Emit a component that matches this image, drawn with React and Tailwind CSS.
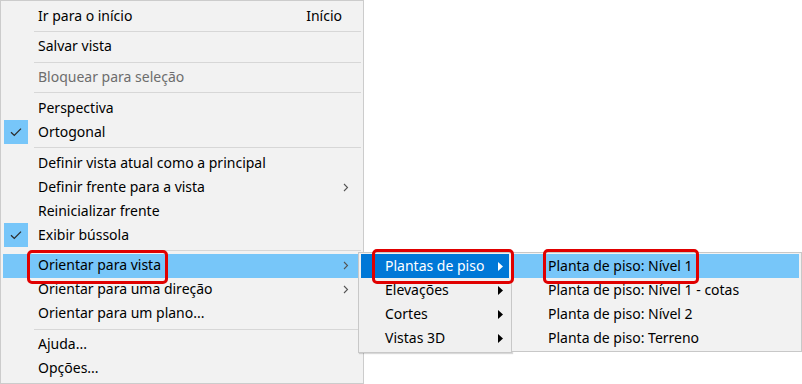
import React from 'react';

const font = { fontFamily: '"Noto Sans", "Open Sans", sans-serif' };

function Check() {
  return (
    <svg width="12" height="10" viewBox="0 0 12 10" fill="none">
      <path d="M1 5.2 L4.3 8.4 L11 1.6" stroke="#2b2b2b" strokeWidth="1.3" />
    </svg>
  );
}

function Chevron() {
  return (
    <svg width="6" height="9" viewBox="0 0 6 9" fill="none">
      <path d="M1 1 L4.5 4.5 L1 8" stroke="#555" strokeWidth="1.1" />
    </svg>
  );
}

function Tri({ white }) {
  return (
    <svg width="5" height="9" viewBox="0 0 5 9">
      <path d="M0 0 L5 4.5 L0 9 Z" fill={white ? '#fff' : '#000'} />
    </svg>
  );
}

function Sep() {
  return (
    <div className="h-[6.8px] flex items-center pl-[33px] pr-[2px]">
      <div className="h-px w-full bg-[#d7d7d7]" />
    </div>
  );
}

function Item({ label, checked, sub, shortcut, disabled, active }) {
  return (
    <div className={`relative h-[24px] flex items-center mx-[2px] ${active ? 'bg-[#77c6f9]' : ''}`}>
      <div className={`w-[24px] h-full flex items-center justify-center ml-px ${checked ? 'bg-[#77c6f9]' : ''}`}>
        {checked && <Check />}
      </div>
      <span className={`ml-[10px] flex-1 pb-[2px] text-[14px] ${disabled ? 'text-[#6d6d6d]' : 'text-black'}`}>{label}</span>
      {shortcut && <span className="pb-[2px] text-[14px] text-black mr-[19px]">{shortcut}</span>}
      {sub && <span className="mr-[12px] flex items-center"><Chevron /></span>}
    </div>
  );
}

export default function App() {
  return (
    <div className="relative w-[802px] h-[384px] bg-white overflow-hidden" style={font}>
      {/* Main menu */}
      <div className="w-[364px] h-[384px] bg-[#f2f2f2] border border-[#cccccc] pt-[3px]">
        <Item label="Ir para o início" shortcut="Início" />
        <Sep />
        <Item label="Salvar vista" />
        <Sep />
        <Item label="Bloquear para seleção" disabled />
        <Sep />
        <Item label="Perspectiva" />
        <Item label="Ortogonal" checked />
        <Sep />
        <Item label="Definir vista atual como a principal" />
        <Item label="Definir frente para a vista" sub />
        <Item label="Reinicializar frente" />
        <Item label="Exibir bússola" checked />
        <Sep />
        <Item label="Orientar para vista" sub active />
        <Item label="Orientar para uma direção" sub />
        <Item label="Orientar para um plano..." />
        <Sep />
        <Item label="Ajuda..." />
        <Item label="Opções..." />
      </div>

      {/* Submenu 1 */}
      <div className="absolute left-[358px] top-[252px] w-[154px] h-[101px] bg-[#f0f0f0] border border-[#c8c8c8] shadow-[1px_1px_1px_rgba(0,0,0,0.15)] pt-px px-[2px]">
        {[
          ['Plantas de piso', true],
          ['Elevações', false],
          ['Cortes', false],
          ['Vistas 3D', false],
        ].map(([label, on]) => (
          <div key={label} className={`h-[24px] flex items-center pl-[24px] pr-[6px] ${on ? 'bg-[#0078d7] text-white' : 'text-black'}`}>
            <span className="flex-1 pb-[2px] text-[14px]">{label}</span>
            <Tri white={on} />
          </div>
        ))}
      </div>

      {/* Submenu 2 */}
      <div className="absolute left-[511px] top-[252px] w-[291px] h-[100px] bg-[#f2f2f2] border border-[#c8c8c8] pt-px px-[2px]">
        {['Planta de piso: Nível 1', 'Planta de piso: Nível 1 - cotas', 'Planta de piso: Nível 2', 'Planta de piso: Terreno'].map((label, i) => (
          <div key={label} className={`h-[24px] flex items-center pl-[34px] pb-[2px] text-[14px] text-black ${i === 0 ? 'bg-[#77c6f9]' : ''}`}>
            {label}
          </div>
        ))}
      </div>

      {/* Red callouts */}
      <div className="absolute left-[27px] top-[250px] w-[141px] h-[34px] border-[3px] border-[#e00000] rounded-[5px]" />
      <div className="absolute left-[372px] top-[249px] w-[142px] h-[35px] border-[3px] border-[#e00000] rounded-[5px]" />
      <div className="absolute left-[543px] top-[249px] w-[156px] h-[35px] border-[3px] border-[#e00000] rounded-[5px]" />
    </div>
  );
}
